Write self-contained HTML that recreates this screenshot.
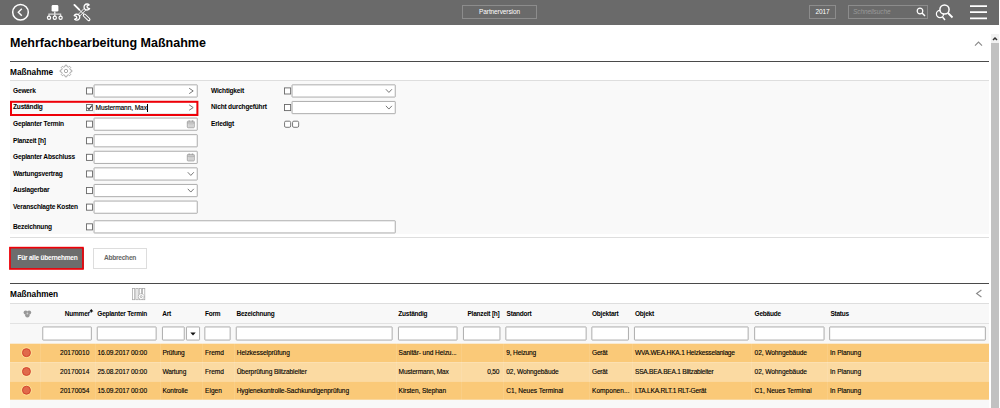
<!DOCTYPE html>
<html><head><meta charset="utf-8">
<style>
*{box-sizing:border-box;margin:0;padding:0}
html,body{width:1000px;height:408px;overflow:hidden;background:#fff;font-family:"Liberation Sans",sans-serif;color:#000}
.abs{position:absolute}
#top{left:0;top:0;width:999px;height:25px;background:#6a6a6a}
.tbox{position:absolute;border:1px solid #8c8c8c;color:#fff;font-size:6.5px;letter-spacing:-0.1px;text-align:center;white-space:nowrap}
#title{left:10px;top:36.3px;font-size:12.5px;font-weight:bold;line-height:15px;white-space:nowrap;color:#000}
.hline{position:absolute;left:10px;width:979px;height:1px;background:#4a4a4a}
.lline{position:absolute;left:10px;width:979px;height:1px;background:#dedede}
.sec{position:absolute;left:10px;font-size:9.3px;transform:scaleX(0.888);transform-origin:0 0;font-weight:bold;line-height:12px;white-space:nowrap}
#formbg{left:10px;top:81px;width:979px;height:153px;background:#f9f9f9}
.lbl{position:absolute;font-size:6.6px;letter-spacing:-0.2px;font-weight:bold;line-height:9px;white-space:nowrap;color:#000}
.cb{position:absolute;width:7px;height:7px;border:1px solid #606060;background:#fff}
.inp{z-index:3;position:absolute;height:13px;border:1px solid #adadad;border-radius:1px;background:#fff;font-size:6.6px;letter-spacing:-0.1px;line-height:11px;padding-left:1.6px;white-space:nowrap;-webkit-text-stroke:0.15px #000}
.btn{position:absolute;font-size:6.6px;letter-spacing:-0.25px;font-weight:bold;text-align:center;white-space:nowrap}
.th{position:absolute;z-index:3;top:309px;font-size:6.5px;letter-spacing:-0.22px;font-weight:bold;line-height:9px;white-space:nowrap;color:#000}
.fi{position:absolute;top:326.5px;height:14px;border:1px solid #adadad;border-radius:1px;background:#fff}
.row{position:absolute;z-index:3;left:10px;width:979px}
.td{position:absolute;z-index:3;font-size:6.6px;letter-spacing:-0.1px;line-height:19px;white-space:nowrap;color:#000;top:0;-webkit-text-stroke:0.12px #000}
.dot{position:absolute;left:12px;top:4.5px;width:9px;height:9px;border-radius:50%;background:#e2614a;border:0.8px solid #c9543f}
.vs{position:absolute;z-index:4;top:304px;width:1px;height:96px;background:rgba(255,255,255,0.1)}
</style></head><body>
<div id="top" class="abs"></div>
<svg class="abs" style="left:11px;top:3px" width="19" height="19" viewBox="0 0 19 19"><circle cx="9.5" cy="9.2" r="7.8" fill="none" stroke="#fff" stroke-width="1.5"/><path d="M10.8 5.7 L7.3 9.2 L10.8 12.7" fill="none" stroke="#fff" stroke-width="1.4"/></svg>
<svg class="abs" style="left:46px;top:4px" width="18" height="17" viewBox="0 0 18 17"><rect x="5.6" y="1" width="6.8" height="6.6" rx="1.4" fill="#fff"/><path d="M8.8 7.5V12" stroke="#fff" stroke-width="1.2" fill="none"/><path d="M3 12.4V10.1H14.6V12.4" stroke="#d8d8d8" stroke-width="1.3" fill="none"/><circle cx="3" cy="13.8" r="1.6" fill="none" stroke="#fff" stroke-width="1.2"/><circle cx="8.8" cy="13.8" r="1.6" fill="none" stroke="#fff" stroke-width="1.2"/><circle cx="14.6" cy="13.8" r="1.6" fill="none" stroke="#fff" stroke-width="1.2"/></svg>
<svg class="abs" style="left:72px;top:3px" width="20" height="19" viewBox="0 0 20 19"><path d="M2.4 1.9 L7.2 6.7" stroke="#fff" stroke-width="1.9" stroke-linecap="round"/><path d="M7 6.5 L11.6 11.1" stroke="#fff" stroke-width="1"/><path d="M12.4 12.2 L16.8 16.5" stroke="#fff" stroke-width="3.3" stroke-linecap="round"/><path d="M12.6 12.4 L16.6 16.3" stroke="#6a6a6a" stroke-width="1.5" stroke-linecap="round"/><path d="M13.9 6.9 L7.7 13.1 M12.3 5.3 L6.1 11.5" stroke="#fff" stroke-width="0.9" fill="none"/><path d="M17.2 1.9 A3 3 0 1 0 17.6 5.6 L15.4 4.9 L15.0 3.0 Z" fill="none" stroke="#fff" stroke-width="1.3" stroke-linejoin="round"/><path d="M2.6 16.3 A3 3 0 1 0 2.2 12.6 L4.4 13.3 L4.8 15.2 Z" fill="none" stroke="#fff" stroke-width="1.3" stroke-linejoin="round"/></svg>
<div class="tbox" style="left:462px;top:5px;width:75px;height:14px;line-height:12px">Partnerversion</div>
<div class="tbox" style="left:809px;top:5px;width:27px;height:14px;line-height:12px">2017</div>
<div class="tbox" style="left:848px;top:5px;width:80px;height:14px;line-height:12px;text-align:left;padding-left:4px;color:#999;font-style:italic">Schnellsuche</div>
<svg class="abs" style="left:916px;top:7px" width="10" height="10" viewBox="0 0 10 10"><circle cx="4" cy="4" r="2.8" fill="none" stroke="#fff" stroke-width="1.2"/><path d="M6 6 L9 9" stroke="#fff" stroke-width="1.4"/></svg>
<svg class="abs" style="left:935px;top:3px" width="20" height="19" viewBox="0 0 20 19"><circle cx="5" cy="11" r="3.6" fill="none" stroke="#fff" stroke-width="1.2"/><path d="M7.5 14 L10 17" stroke="#fff" stroke-width="1.4"/><circle cx="9.5" cy="6.5" r="4.6" fill="#6a6a6a" stroke="#fff" stroke-width="1.5"/><path d="M13 10 L17.5 14.5" stroke="#fff" stroke-width="1.8"/></svg>
<svg class="abs" style="left:970px;top:4px" width="18" height="17" viewBox="0 0 18 17"><path d="M0 2.1H17M0 8.2H17M0 14.3H17" stroke="#fff" stroke-width="1.8"/></svg>
<div class="abs" style="left:991px;top:34px;width:8px;height:9px;background:#f1f1f1"></div>
<div class="abs" style="left:991px;top:43px;width:8px;height:365px;background:#c1c1c1"></div>
<svg class="abs" style="left:991px;top:35px" width="8" height="8" viewBox="0 0 8 8"><path d="M2 5 L4 3 L6 5" fill="none" stroke="#333" stroke-width="1.5"/></svg>
<div id="title" class="abs">Mehrfachbearbeitung Maßnahme</div>
<svg class="abs" style="left:974px;top:40px" width="9" height="7" viewBox="0 0 9 7"><path d="M1 5.7 L4.5 2 L8 5.7" fill="none" stroke="#8a8a8a" stroke-width="1.1"/></svg>
<div class="hline" style="top:61px"></div>
<div class="sec" style="top:65.6px">Maßnahme</div>
<svg class="abs" style="left:59.4px;top:64.4px" width="14" height="14" viewBox="0 0 14 14"><path d="M5.95 2.62 L6.21 1.15 L7.79 1.15 L8.05 2.62 L9.35 3.16 L10.58 2.31 L11.69 3.42 L10.84 4.65 L11.38 5.95 L12.85 6.21 L12.85 7.79 L11.38 8.05 L10.84 9.35 L11.69 10.58 L10.58 11.69 L9.35 10.84 L8.05 11.38 L7.79 12.85 L6.21 12.85 L5.95 11.38 L4.65 10.84 L3.42 11.69 L2.31 10.58 L3.16 9.35 L2.62 8.05 L1.15 7.79 L1.15 6.21 L2.62 5.95 L3.16 4.65 L2.31 3.42 L3.42 2.31 L4.65 3.16Z" fill="none" stroke="#8f8f8f" stroke-width="0.75" stroke-linejoin="round"/><circle cx="7" cy="7" r="1.7" fill="none" stroke="#8f8f8f" stroke-width="0.75"/></svg>
<div class="lline" style="top:80px"></div>
<div id="formbg" class="abs"></div>
<div class="lbl" style="left:13px;top:85.7px">Gewerk</div>
<div class="lbl" style="left:13px;top:102.2px">Zuständig</div>
<div class="inp" style="left:94px;top:102.3px;width:90px;border:none;background:none">Mustermann, Max<span style="display:inline-block;width:0.8px;height:8px;background:#000;vertical-align:-1.5px"></span></div>
<div class="lbl" style="left:13px;top:118.9px">Geplanter Termin</div>
<div class="lbl" style="left:13px;top:135.5px">Planzeit [h]</div>
<div class="lbl" style="left:13px;top:152.1px">Geplanter Abschluss</div>
<div class="lbl" style="left:13px;top:168.7px">Wartungsvertrag</div>
<div class="lbl" style="left:13px;top:185.2px">Auslagerbar</div>
<div class="lbl" style="left:13px;top:201.9px">Veranschlagte Kosten</div>
<div class="lbl" style="left:13px;top:221.6px">Bezeichnung</div>
<div class="lbl" style="left:211px;top:85.7px">Wichtigkeit</div>
<div class="lbl" style="left:211px;top:102.2px">Nicht durchgeführt</div>
<div class="lbl" style="left:211px;top:118.9px">Erledigt</div>
<div class="lline" style="top:237px"></div>
<div class="btn" style="left:10px;top:248px;width:74px;height:21px;background:#6d6d6d;color:#fff;line-height:20px;padding-left:1px">Für alle übernehmen</div>
<div class="btn" style="left:93px;top:248px;width:54px;height:21px;background:#fff;border:1px solid #ddd;color:#666;line-height:18px">Abbrechen</div>
<div class="hline" style="top:283px"></div>
<div class="sec" style="top:288px">Maßnahmen</div>
<svg class="abs" style="left:132px;top:287.8px" width="14" height="13" viewBox="0 0 14 13"><g fill="#fff" stroke="#a6a6a6" stroke-width="0.75"><rect x="0.5" y="0.5" width="2.2" height="11.2"/><rect x="3.9" y="0.5" width="2.2" height="11.2"/><rect x="7.2" y="0.5" width="2.2" height="11.2"/><rect x="10.5" y="0.5" width="2.3" height="11.2"/></g><circle cx="9.2" cy="8.6" r="2.9" fill="#fff" stroke="#a0a0a0" stroke-width="0.9" stroke-dasharray="1.3 0.6"/><circle cx="9.2" cy="8.6" r="1" fill="none" stroke="#999" stroke-width="0.7"/></svg>
<svg class="abs" style="left:975px;top:289px" width="8" height="9" viewBox="0 0 8 9"><path d="M6.4 1 L1.6 4.5 L6.4 8" fill="none" stroke="#8a8a8a" stroke-width="1.1"/></svg>
<div class="lline" style="top:303px"></div>
<div class="abs" style="left:10px;top:304px;width:979px;height:40px;background:#f8f8f8"></div>
<div class="lline" style="top:323px;background:#e2e2e2"></div>
<svg class="abs" style="left:22.5px;top:309.5px" width="9" height="8" viewBox="0 0 9 8"><circle cx="2.7" cy="2.6" r="2.1" fill="#989898"/><circle cx="6.1" cy="2.6" r="2.1" fill="#989898"/><circle cx="4.4" cy="5.2" r="2.2" fill="#989898"/><circle cx="4.4" cy="3.5" r="0.9" fill="#d0d0d0"/></svg>
<div class="th" style="left:64.8px">Nummer</div>
<div class="th" style="left:97.3px">Geplanter Termin</div>
<div class="th" style="left:162.3px">Art</div>
<div class="th" style="left:205.0px">Form</div>
<div class="th" style="left:236.5px">Bezeichnung</div>
<div class="th" style="left:398.3px">Zuständig</div>
<div class="th" style="left:467.5px">Planzeit [h]</div>
<div class="th" style="left:506.6px">Standort</div>
<div class="th" style="left:592.0px">Objektart</div>
<div class="th" style="left:635.0px">Objekt</div>
<div class="th" style="left:754.6px">Gebäude</div>
<div class="th" style="left:830.4px">Status</div>
<svg class="abs" style="z-index:5;left:88.6px;top:308.6px" width="5" height="4" viewBox="0 0 5 4"><path d="M0.2 2.5 L2.3 0.1 L4.4 2.5Z M1.7 2.5H2.9V3.6H1.7Z" fill="#111"/></svg>
<div class="row" style="top:343.0px;height:19px">
<div class="td" style="letter-spacing:0.007px;right:899.6px">20170010</div>
<div class="td" style="letter-spacing:-0.109px;left:87.4px">16.09.2017 00:00</div>
<div class="td" style="letter-spacing:-0.116px;left:152.4px">Prüfung</div>
<div class="td" style="letter-spacing:-0.033px;left:195.0px">Fremd</div>
<div class="td" style="letter-spacing:-0.068px;left:226.7px">Heizkesselprüfung</div>
<div class="td" style="letter-spacing:-0.100px;left:388.6px">Sanitär- und Heizu...</div>
<div class="td" style="letter-spacing:-0.183px;left:496.3px">9, Heizung</div>
<div class="td" style="letter-spacing:-0.220px;left:582.0px">Gerät</div>
<div class="td" style="letter-spacing:-0.200px;left:625.0px">WVA.WEA.HKA.1 Heizkesselanlage</div>
<div class="td" style="letter-spacing:-0.099px;left:744.6px">02, Wohngebäude</div>
<div class="td" style="letter-spacing:-0.053px;left:820.0px">In Planung</div>
</div>
<div class="row" style="top:362.0px;height:19px">
<div class="td" style="letter-spacing:0.007px;right:899.6px">20170014</div>
<div class="td" style="letter-spacing:-0.109px;left:87.4px">25.08.2017 00:00</div>
<div class="td" style="letter-spacing:-0.127px;left:152.4px">Wartung</div>
<div class="td" style="letter-spacing:-0.033px;left:195.0px">Fremd</div>
<div class="td" style="letter-spacing:-0.099px;left:226.7px">Überprüfung Blitzableiter</div>
<div class="td" style="letter-spacing:-0.185px;left:388.6px">Mustermann, Max</div>
<div class="td" style="letter-spacing:-0.211px;right:489.8px">0,50</div>
<div class="td" style="letter-spacing:-0.099px;left:496.3px">02, Wohngebäude</div>
<div class="td" style="letter-spacing:-0.220px;left:582.0px">Gerät</div>
<div class="td" style="letter-spacing:-0.232px;left:625.0px">SSA.BEA.BEA.1 Blitzableiter</div>
<div class="td" style="letter-spacing:-0.099px;left:744.6px">02, Wohngebäude</div>
<div class="td" style="letter-spacing:-0.053px;left:820.0px">In Planung</div>
</div>
<div class="row" style="top:381.0px;height:19px">
<div class="td" style="letter-spacing:0.007px;right:899.6px">20170054</div>
<div class="td" style="letter-spacing:-0.109px;left:87.4px">15.09.2017 00:00</div>
<div class="td" style="letter-spacing:-0.070px;left:152.4px">Kontrolle</div>
<div class="td" style="letter-spacing:0.025px;left:195.0px">Eigen</div>
<div class="td" style="letter-spacing:-0.088px;left:226.7px">Hygienekontrolle-Sachkundigenprüfung</div>
<div class="td" style="letter-spacing:-0.085px;left:388.6px">Kirsten, Stephan</div>
<div class="td" style="letter-spacing:-0.044px;left:496.3px">C1, Neues Terminal</div>
<div class="td" style="letter-spacing:0.010px;left:582.0px">Komponen...</div>
<div class="td" style="letter-spacing:-0.222px;left:625.0px">LTA.LKA.RLT.1 RLT-Gerät</div>
<div class="td" style="letter-spacing:-0.044px;left:744.6px">C1, Neues Terminal</div>
<div class="td" style="letter-spacing:-0.053px;left:820.0px">In Planung</div>
</div>
<div class="vs" style="left:39.7px"></div>
<div class="vs" style="left:94.7px"></div>
<div class="vs" style="left:159.5px"></div>
<div class="vs" style="left:202.0px"></div>
<div class="vs" style="left:233.5px"></div>
<div class="vs" style="left:395.5px"></div>
<div class="vs" style="left:460.5px"></div>
<div class="vs" style="left:502.8px"></div>
<div class="vs" style="left:588.6px"></div>
<div class="vs" style="left:631.8px"></div>
<div class="vs" style="left:751.4px"></div>
<div class="vs" style="left:827.0px"></div>
<div class="abs" style="left:10px;top:399px;width:979px;height:9px;background:#f8f8f8"></div>
<svg class="abs" style="left:0;top:0" width="1000" height="408" viewBox="0 0 1000 408"><rect x="10" y="343.70" width="979" height="18.60" fill="#fac978"/><circle cx="26.45" cy="352.65" r="4.95" fill="none" stroke="rgba(255,240,175,0.55)" stroke-width="0.9"/><circle cx="26.45" cy="352.65" r="3.95" fill="#e06a4b" stroke="#d4442f" stroke-width="1"/><rect x="10" y="362.30" width="979" height="19.10" fill="#fbdaa2"/><circle cx="26.45" cy="371.50" r="4.95" fill="none" stroke="rgba(255,240,175,0.55)" stroke-width="0.9"/><circle cx="26.45" cy="371.50" r="3.95" fill="#e06a4b" stroke="#d4442f" stroke-width="1"/><rect x="10" y="381.40" width="979" height="18.30" fill="#fac978"/><circle cx="26.45" cy="390.20" r="4.95" fill="none" stroke="rgba(255,240,175,0.55)" stroke-width="0.9"/><circle cx="26.45" cy="390.20" r="3.95" fill="#e06a4b" stroke="#d4442f" stroke-width="1"/><rect x="86.45" y="87.90" width="6.10" height="6.10" rx="0.0" fill="#fff" stroke="#686868" stroke-width="0.90"/><rect x="94.05" y="84.85" width="103.20" height="12.20" rx="0.4" fill="#fff" stroke="#a4a4a4" stroke-width="0.90"/><path d="M189.20 88.25 l4 2.7 l-4 2.7" fill="none" stroke="#777" stroke-width="1"/><rect x="86.45" y="104.50" width="6.10" height="6.10" rx="0.0" fill="#fff" stroke="#686868" stroke-width="0.90"/><rect x="94.05" y="101.45" width="103.20" height="12.20" rx="0.4" fill="#fff" stroke="#e2e2e2" stroke-width="0.90"/><path d="M189.20 104.85 l4 2.7 l-4 2.7" fill="none" stroke="#777" stroke-width="1"/><rect x="86.45" y="121.10" width="6.10" height="6.10" rx="0.0" fill="#fff" stroke="#686868" stroke-width="0.90"/><rect x="94.05" y="118.05" width="103.20" height="12.20" rx="0.4" fill="#fff" stroke="#a4a4a4" stroke-width="0.90"/><g transform="translate(186.80,119.85)"><rect x="0.5" y="1.3" width="7" height="6.6" rx="0.8" fill="#dcdcdc" stroke="#9c9c9c" stroke-width="0.8"/><path d="M0.5 3.1H7.5" stroke="#9c9c9c" stroke-width="0.8"/><path d="M2.4 0.4V2M5.6 0.4V2" stroke="#999" stroke-width="0.8"/><path d="M1.8 4.7H6.2M1.8 6.2H6.2" stroke="#bdbdbd" stroke-width="0.6"/></g><rect x="86.45" y="137.70" width="6.10" height="6.10" rx="0.0" fill="#fff" stroke="#686868" stroke-width="0.90"/><rect x="94.05" y="134.65" width="103.20" height="12.20" rx="0.4" fill="#fff" stroke="#a4a4a4" stroke-width="0.90"/><rect x="86.45" y="154.30" width="6.10" height="6.10" rx="0.0" fill="#fff" stroke="#686868" stroke-width="0.90"/><rect x="94.05" y="151.25" width="103.20" height="12.20" rx="0.4" fill="#fff" stroke="#a4a4a4" stroke-width="0.90"/><g transform="translate(186.80,153.05)"><rect x="0.5" y="1.3" width="7" height="6.6" rx="0.8" fill="#dcdcdc" stroke="#9c9c9c" stroke-width="0.8"/><path d="M0.5 3.1H7.5" stroke="#9c9c9c" stroke-width="0.8"/><path d="M2.4 0.4V2M5.6 0.4V2" stroke="#999" stroke-width="0.8"/><path d="M1.8 4.7H6.2M1.8 6.2H6.2" stroke="#bdbdbd" stroke-width="0.6"/></g><rect x="86.45" y="170.90" width="6.10" height="6.10" rx="0.0" fill="#fff" stroke="#686868" stroke-width="0.90"/><rect x="94.05" y="167.85" width="103.20" height="12.20" rx="0.4" fill="#fff" stroke="#a4a4a4" stroke-width="0.90"/><path d="M187.80 172.25 l3 3.2 l3 -3.2" fill="none" stroke="#777" stroke-width="1"/><rect x="86.45" y="187.50" width="6.10" height="6.10" rx="0.0" fill="#fff" stroke="#686868" stroke-width="0.90"/><rect x="94.05" y="184.45" width="103.20" height="12.20" rx="0.4" fill="#fff" stroke="#a4a4a4" stroke-width="0.90"/><path d="M187.80 188.85 l3 3.2 l3 -3.2" fill="none" stroke="#777" stroke-width="1"/><rect x="86.45" y="204.10" width="6.10" height="6.10" rx="0.0" fill="#fff" stroke="#686868" stroke-width="0.90"/><rect x="94.05" y="201.05" width="103.20" height="12.20" rx="0.4" fill="#fff" stroke="#a4a4a4" stroke-width="0.90"/><rect x="86.45" y="223.80" width="6.10" height="6.10" rx="0.0" fill="#fff" stroke="#686868" stroke-width="0.90"/><rect x="94.05" y="220.75" width="301.20" height="12.20" rx="0.4" fill="#fff" stroke="#a4a4a4" stroke-width="0.90"/><rect x="11" y="101.8" width="186.4" height="13.2" fill="none" stroke="#ee0008" stroke-width="2"/><path d="M87.4 107.6 L89 109.4 L91.9 105.7" fill="none" stroke="#333" stroke-width="1.1"/><rect x="284.55" y="87.90" width="6.10" height="6.10" rx="0.0" fill="#fff" stroke="#686868" stroke-width="0.90"/><rect x="292.05" y="84.85" width="103.20" height="12.20" rx="0.4" fill="#fff" stroke="#a4a4a4" stroke-width="0.90"/><path d="M385.90 89.25 l3 3.2 l3 -3.2" fill="none" stroke="#777" stroke-width="1"/><rect x="284.55" y="104.50" width="6.10" height="6.10" rx="0.0" fill="#fff" stroke="#686868" stroke-width="0.90"/><rect x="292.05" y="101.45" width="103.20" height="12.20" rx="0.4" fill="#fff" stroke="#a4a4a4" stroke-width="0.90"/><path d="M385.90 105.85 l3 3.2 l3 -3.2" fill="none" stroke="#777" stroke-width="1"/><rect x="284.55" y="121.20" width="6.10" height="6.10" rx="1.3" fill="#fff" stroke="#6a6a6a" stroke-width="0.90"/><rect x="292.55" y="121.20" width="6.10" height="6.10" rx="1.3" fill="#fff" stroke="#6a6a6a" stroke-width="0.90"/><rect x="9.95" y="247.65" width="73" height="21.3" fill="none" stroke="#ee0008" stroke-width="1.7"/><rect x="42.75" y="326.95" width="48.60" height="13.10" rx="0.4" fill="#fff" stroke="#a4a4a4" stroke-width="0.90"/><rect x="97.25" y="326.95" width="58.90" height="13.10" rx="0.4" fill="#fff" stroke="#a4a4a4" stroke-width="0.90"/><rect x="162.45" y="326.95" width="21.80" height="13.10" rx="0.4" fill="#fff" stroke="#a4a4a4" stroke-width="0.90"/><rect x="204.85" y="326.95" width="25.30" height="13.10" rx="0.4" fill="#fff" stroke="#a4a4a4" stroke-width="0.90"/><rect x="236.25" y="326.95" width="155.90" height="13.10" rx="0.4" fill="#fff" stroke="#a4a4a4" stroke-width="0.90"/><rect x="398.45" y="326.95" width="58.60" height="13.10" rx="0.4" fill="#fff" stroke="#a4a4a4" stroke-width="0.90"/><rect x="463.45" y="326.95" width="36.50" height="13.10" rx="0.4" fill="#fff" stroke="#a4a4a4" stroke-width="0.90"/><rect x="505.85" y="326.95" width="80.30" height="13.10" rx="0.4" fill="#fff" stroke="#a4a4a4" stroke-width="0.90"/><rect x="591.85" y="326.95" width="36.60" height="13.10" rx="0.4" fill="#fff" stroke="#a4a4a4" stroke-width="0.90"/><rect x="634.45" y="326.95" width="113.70" height="13.10" rx="0.4" fill="#fff" stroke="#a4a4a4" stroke-width="0.90"/><rect x="754.65" y="326.95" width="69.40" height="13.10" rx="0.4" fill="#fff" stroke="#a4a4a4" stroke-width="0.90"/><rect x="829.65" y="326.95" width="155.70" height="13.10" rx="0.4" fill="#fff" stroke="#a4a4a4" stroke-width="0.90"/><rect x="186.45" y="326.95" width="13.10" height="13.10" rx="0.4" fill="#fff" stroke="#a4a4a4" stroke-width="0.90"/><path d="M190.3 332.4 H195.7 L193 335.6Z" fill="#111"/></svg>
</body></html>
